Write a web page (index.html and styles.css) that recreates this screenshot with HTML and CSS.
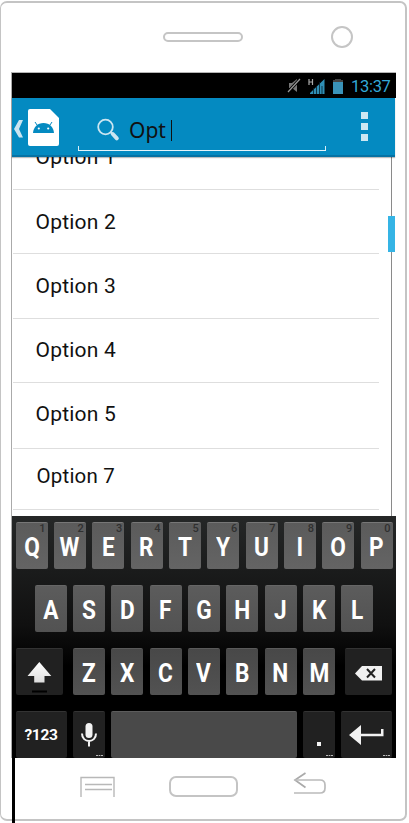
FILE: index.html
```html
<!DOCTYPE html>
<html lang="en">
<head>
<meta charset="utf-8">
<title>Search options</title>
<link rel="stylesheet" href="styles.css">
</head>
<body>
<div class="phone">
  <header class="top">
    <div class="speaker"></div>
    <div class="camera"></div>
  </header>
  <main class="screen">
    <div class="status">
      <svg class="mute" width="14" height="15" viewBox="0 0 14 15"><path d="M2 5h3l5-4v13l-5-4H2z" fill="#777"/><path d="M13 1 1 14" stroke="#000" stroke-width="3"/><path d="M13 1 1 14" stroke="#999" stroke-width="1.2"/></svg>
      <svg class="signal" width="17" height="16" viewBox="0 0 17 16"><path d="M1 1v6M4.500 1v6M1 4h3.500" stroke="#aaa" stroke-width="1.200"/><path d="M2 16v-1L16.500 1v15z" fill="#2f8fb5"/><path d="M5.500 10v6M8.500 8v8M11.500 4v12M14 8v8" stroke="#06202b" stroke-width=".8"/></svg>
      <svg class="battery" width="10" height="15" viewBox="0 0 10 15"><path d="M2 0h6v1h2v3H0V1h2z" fill="#444"/><path d="M0 3h10v12H0z" fill="#3a93b9"/></svg>
      <span class="clock">13:37</span>
    </div>
    <div class="actionbar">
      <svg class="up" width="10" height="18" viewBox="0 0 10 18"><path d="M5 0h4L5 9l4 8.500H5L0 9z" fill="#cbe5f1"/></svg>
      <svg class="app" width="31" height="37" viewBox="0 0 31 37"><path d="M2 0h20l9 9v26q0 2-2 2H2q-2 0-2-2V2q0-2 2-2z" fill="#fff"/><path d="m9 16-2-3M22 16l2-3" fill="none" stroke="#048ac1" stroke-width="1"/><path d="M5 24c.5-6 4.500-10 10.500-10S25.500 18 26 24z" fill="#048ac1"/><circle cx="10.800" cy="19.500" r="1.100" fill="#fff"/><circle cx="20.200" cy="19.500" r="1.100" fill="#fff"/></svg>
      <div class="search">
        <svg width="24" height="24" viewBox="0 0 24 24"><circle cx="9.500" cy="9" r="7.300" fill="none" stroke="#cbe5f1" stroke-width="1.800"/><path d="m14.500 14 2 2" stroke="#cbe5f1" stroke-width="2"/><path d="m16.800 16 4 4.300" stroke="#cbe5f1" stroke-width="4" stroke-linecap="round"/></svg>
        <span class="query">Opt</span><i class="caret"></i>
      </div>
      <div class="more"><i></i><i></i><i></i></div>
    </div>
    <div class="list">
      <div class="row r1"><span>Option 1</span></div>
      <div class="row r2"><span>Option 2</span></div>
      <div class="row r3"><span>Option 3</span></div>
      <div class="row r4"><span>Option 4</span></div>
      <div class="row r5"><span>Option 5</span></div>
      <div class="row r7"><span>Option 7</span></div>
      <div class="track"><div class="thumb"></div></div>
    </div>
    <div class="keyboard">
      <div class="keys k1">
        <b><span>Q</span><sup>1</sup></b><b><span>W</span><sup>2</sup></b><b><span>E</span><sup>3</sup></b><b><span>R</span><sup>4</sup></b><b><span>T</span><sup>5</sup></b><b><span>Y</span><sup>6</sup></b><b><span>U</span><sup>7</sup></b><b><span>I</span><sup>8</sup></b><b><span>O</span><sup>9</sup></b><b><span>P</span><sup>0</sup></b>
      </div>
      <div class="keys k2">
        <b><span>A</span></b><b><span>S</span></b><b><span>D</span></b><b><span>F</span></b><b><span>G</span></b><b><span>H</span></b><b><span>J</span></b><b><span>K</span></b><b><span>L</span></b>
      </div>
      <div class="keys k3">
        <b class="dark shift"><svg width="47" height="47" viewBox="0 0 47 47"><defs><linearGradient id="g" x2="0" y2="1"><stop stop-color="#fff"/><stop offset="1" stop-color="#ddd"/></linearGradient></defs><path d="M23.300 13 35.300 27H28.500v6.500H18.200V27H11.500z" fill="url(#g)"/><path d="M16 42.500h15" stroke="#000" stroke-width="2"/></svg></b>
        <b><span>Z</span></b><b><span>X</span></b><b><span>C</span></b><b><span>V</span></b><b><span>B</span></b><b><span>N</span></b><b><span>M</span></b>
        <b class="dark del"><svg width="27" height="15" viewBox="0 0 27 15"><path d="M7 0h20v14.500H7L0 7.500z" fill="#f1f1f1"/><path d="m12 3 8 8.500M20 3l-8 8.500" stroke="#222" stroke-width="2"/></svg></b>
      </div>
      <div class="keys k4">
        <b class="dark sym">?123</b>
        <b class="dark mic"><svg width="16" height="24" viewBox="0 0 16 24"><rect x="4.500" width="7" height="15" rx="3.500" fill="#f2f2f2"/><path d="M1 10.500c0 10 14 10 14 0M8 18v5.500" fill="none" stroke="#f2f2f2" stroke-width="2"/></svg><em></em></b>
        <b class="space"></b>
        <b class="dark dot"><i></i><em></em></b>
        <b class="dark enter"><svg width="35" height="20" viewBox="0 0 35 20"><path d="M0 10 12 0v8.700h20V4h2.500v7.300H12V20z" fill="#f2f2f2"/></svg><em></em></b>
      </div>
    </div>
  </main>
  <footer class="nav">
    <svg class="menu" width="35" height="22" viewBox="0 0 35 22"><path d="M1 21V1.500h33V21M5 8.500h27M5 13.500h27" fill="none" stroke="#b8b8b8" stroke-width="1.400"/></svg>
    <div class="home"></div>
    <svg class="back" width="34" height="24" viewBox="0 0 34 24"><path d="M12.500 1 2 8l10.500 7.500" fill="none" stroke="#aaa" stroke-width="1.700"/><path d="M2 8h25q5 0 5 5v3q0 5-5 5H1" fill="none" stroke="#bbb" stroke-width="1.700"/></svg>
  </footer>
  <div class="cable"></div>
</div>
</body>
</html>
```
FILE: styles.css
```css
* { box-sizing: border-box; }
html, body { margin: 0; background: #fff; overflow: hidden; }
body { height: 823px; padding-top: 1px; font-family: Roboto, "Noto Sans", sans-serif; }
svg { display: block; flex: none; }
.phone {
  position: relative; width: 407px; height: 820px;
  border: 2px solid #c4c4c4; border-left-width: 1px; border-radius: 7px;
}
.top { height: 69px; display: flex; align-items: center; padding: 0 52px 0 162px; justify-content: space-between; }
.speaker { width: 80px; height: 10px; border: 2px solid #c5c5c5; border-radius: 5px; margin-bottom: 1px; }
.camera { width: 22px; height: 22px; border: 2px solid #c5c5c5; border-radius: 50%; margin-bottom: 1px; }
.screen { width: 385px; height: 686px; margin-left: 10px; border-top: 1px solid #b5b5b5; border-left: 1px solid #aaa; }
.status { height: 25px; background: #000; display: flex; align-items: center; justify-content: flex-end; padding-right: 6px; }
.mute { margin-right: 1px; }
.signal { margin-left: 6px; }
.battery { margin: 1px 8px 0 8px; }
.clock { font-size: 16.500px; line-height: 25px; color: #33a9d8; width: 39px; white-space: nowrap; padding-top: 1px; letter-spacing: -.3px; }
.actionbar {
  position: relative; z-index: 1; width: 383px; height: 59px; background: #048ac1;
  border-bottom: 2px solid #0672a4; box-shadow: 0 1px 1px rgba(0,0,0,.25);
  display: flex; align-items: flex-start;
}
.up { margin: 22px 0 0 2px; }
.app { margin: 11px 0 0 4px; }
.search {
  width: 248px; height: 53px; margin: 0 0 0 19px; padding: 0 0 1px 18px; display: flex; align-items: center;
  border-bottom: 1px solid #e6f4fa; background: linear-gradient(#d8edf6,#d8edf6) left bottom/1px 4px no-repeat, linear-gradient(#d8edf6,#d8edf6) right bottom/1px 4px no-repeat;
}
.search svg { margin-top: 13px; }
.query { font: 21px/30px "Noto Sans", sans-serif; color: #111; margin: 12px 0 0 9px; }
.caret { width: 1px; height: 21px; background: #111; margin: 13px 0 0 5px; }
.more { margin: 14px 0 0 35px; display: grid; gap: 4px; }
.more i { width: 7px; height: 7px; background: #cde7f2; }
.list { position: relative; height: 359px; width: 384px; }
.row { width: 366px; margin-left: 1px; border-bottom: 1px solid #dedede; padding-left: 22.500px; font-size: 21px; color: #111; display: flex; align-items: center; letter-spacing: .2px; }
.r1 { height: 33px; align-items: flex-start; }
.r1 span { line-height: 24px; margin-top: -12px; }
.r2, .r4 { height: 64px; }
.r3 { height: 65px; padding-bottom: 1px; }
.r4 { padding-bottom: 2px; }
.r5 { height: 66px; padding-bottom: 4px; }
.r7 { height: 61px; font-size: 20.500px; padding: 0 0 6px 23.500px; }
.track { position: absolute; right: 4px; top: 0; width: 1px; height: 359px; background: #8a8a8a; }
.thumb { width: 7px; height: 36px; margin: 59px 0 0 -3px; background: #35b4e5; }
.keyboard {
  height: 242px; background: linear-gradient(#252727, #101010 45%, #000 62%, #000);
  padding: 6px 3.500px 0; display: flex; flex-direction: column; gap: 16px;
}
.keys { display: flex; gap: 6.350px; height: 47px; flex: none; }
.keys b {
  position: relative; flex: none; width: 32px; height: 47px; border-radius: 2px; padding-top: 1px;
  background: linear-gradient(#5b5b5b, #646464); border-top: 1px solid #777;
  color: #fff; font-size: 26px; font-weight: 700; line-height: 47px;
  display: flex; justify-content: center; align-items: center;
}
.keys span { transform: scaleX(.87); line-height: 26px; }
.keys sup { position: absolute; right: 2px; top: 0; font-size: 11px; font-weight: 500; line-height: 12px; color: #303030; }
.k2 { padding-left: 19px; }
.keys.k2 b { background: linear-gradient(#5c5c5c, #525252); border-top-color: #666; }
.keys.k3 b { background: linear-gradient(#484848, #525252); border-top-color: #5a5a5a; }
.keys.k4 b { background: #494949; border-top-color: #5c5c5c; }
.keys.k3 .dark, .keys.k4 .dark { background: #212121; border-top-color: #333; }
.keys .shift { width: 47px; margin-right: 4px; padding: 0; }
.keys .del { width: 47px; margin-left: 3.500px; padding: 2px 0 0; }
.keys .sym { width: 51px; font-size: 15.500px; padding: 0; letter-spacing: -.3px; }
.keys .mic { padding: 0; }
.keys .space { width: 185.500px; }
.keys .dot i { width: 4px; height: 4px; background: #f2f2f2; margin-top: 16px; }
.keys .enter { width: 51px; padding: 0; }
.keys em { position: absolute; right: 2px; bottom: 2px; width: 7px; height: 1px; background: linear-gradient(90deg, #bbb 2px, #555 2px 3px, #bbb 3px 4px, #555 4px 5px, #bbb 5px); }
.nav { height: 60px; display: flex; align-items: flex-start; }
.menu { margin: 18px 0 0 79px; }
.home { width: 69px; height: 21px; border: 2px solid #c4c4c4; border-radius: 7px; margin: 18px 0 0 54px; }
.back { margin: 14px 0 0 55px; }
.cable { position: absolute; left: 11px; top: 752px; width: 3px; height: 70px; background: #000; }
```
